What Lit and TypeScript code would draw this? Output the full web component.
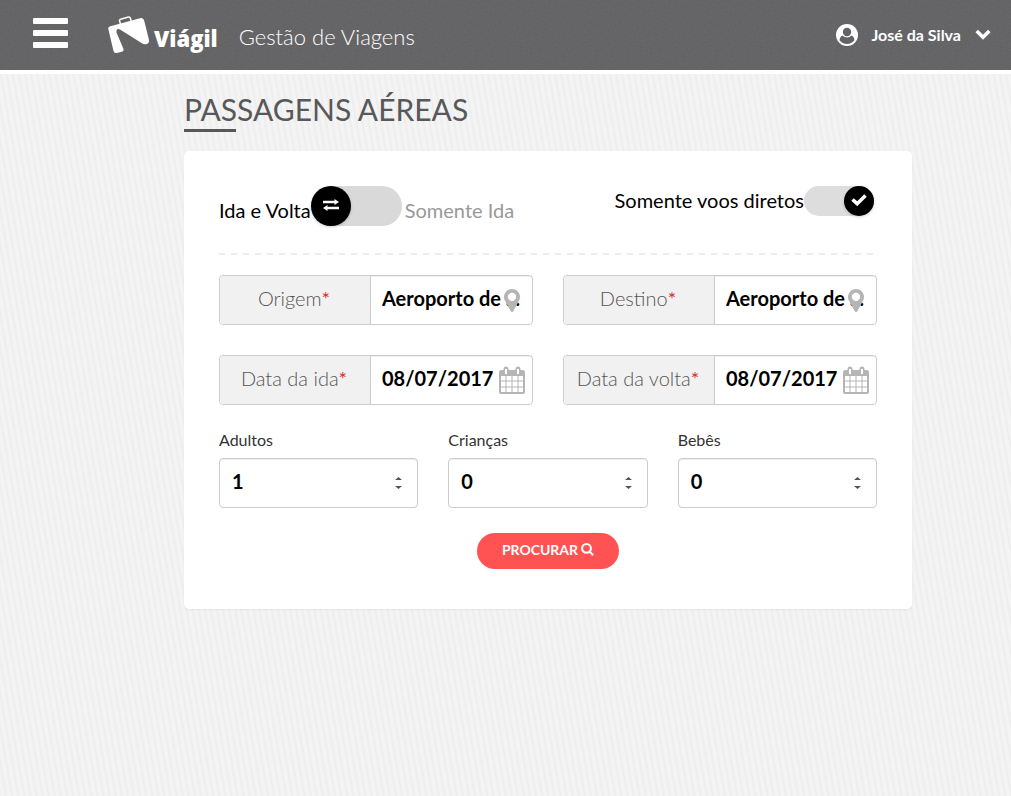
import { LitElement, html, css } from "lit";
import { customElement, property, state } from "lit/decorators.js";

const pinIcon = html`<svg class="pin" viewBox="0 0 16 23" width="16" height="23" aria-hidden="true">
  <path fill="#b5b5b5" fill-rule="evenodd" d="M8 0a8 8 0 0 1 8 8c0 1.300-.3 2.400-.8 3.400L9.300 22.200a1.500 1.500 0 0 1-2.600 0L.8 11.400A7.500 7.500 0 0 1 0 8a8 8 0 0 1 8-8Zm0 3.700a4.200 4.200 0 1 0 0 8.400 4.200 4.200 0 0 0 0-8.400Z"/>
</svg>`;

const calendarIcon = html`<svg class="calendar" viewBox="0 0 26 28" width="26" height="28" aria-hidden="true">
  <path fill="#b5b5b5" fill-rule="evenodd" d="M2 4h2.500V2.800A2.500 2.500 0 0 1 7 .5a2.500 2.500 0 0 1 2.500 2.300V4h7V2.800A2.500 2.500 0 0 1 19 .5a2.500 2.500 0 0 1 2.500 2.300V4H24a2 2 0 0 1 2 2v20a2 2 0 0 1-2 2H2a2 2 0 0 1-2-2V6a2 2 0 0 1 2-2Zm4-1v5h2V3ZM18 3v5h2V3ZM2 10v4.500h4.500V10Zm5.500 0v4.500h5V10Zm6 0v4.500h5V10Zm6 0v4.500H24V10ZM2 15.500v5h4.500v-5Zm5.500 0v5h5v-5Zm6 0v5h5v-5Zm6 0v5H24v-5ZM2 21.500V26h4.500v-4.500Zm5.500 0V26h5v-4.500Zm6 0V26h5v-4.500Zm6 0V26H24v-4.500Z"/>
</svg>`;

const baseText = css`
  * { box-sizing: border-box; }
  input, button { font-family: inherit; margin: 0; }
`;

@customElement("top-bar")
export class TopBar extends LitElement {
  static styles = [baseText, css`
    :host { display: block; }
    .bar {
      display: flex;
      align-items: center;
      height: 74px;
      padding: 0 20px 0 33px;
      border-bottom: 4px solid #fff;
      color: #fff;
      background-color: #5f5f61;
      background-image: url("data:image/svg+xml,%3Csvg xmlns='http://www.w3.org/2000/svg' width='120' height='120'%3E%3Cfilter id='n'%3E%3CfeTurbulence type='fractalNoise' baseFrequency='.7' numOctaves='2' stitchTiles='stitch'/%3E%3CfeColorMatrix type='saturate' values='0'/%3E%3C/filter%3E%3Crect width='120' height='120' filter='url(%23n)' opacity='.12'/%3E%3C/svg%3E");
    }
    button { border: 0; padding: 0; background: none; color: inherit; cursor: pointer; }
    .menu { display: grid; gap: 6px; width: 35px; padding-bottom: 5px; }
    .menu span { height: 6px; border-radius: 1px; background: #fff; }
    .brand {
      display: flex;
      align-items: center;
      margin-left: 40px;
      color: inherit;
      text-decoration: none;
    }
    .name { margin: 5px 0 0 4px; font: 800 22px/30px "Open Sans", "Noto Sans", sans-serif; }
    .tagline { margin: 4px 0 0 21px; font-size: 22px; line-height: 30px; font-weight: 300; }
    .user {
      display: flex;
      align-items: center;
      margin-left: auto;
      padding-bottom: 1px;
      font-size: 16px;
      line-height: 22px;
      font-weight: 700;
    }
    .user span { margin: 0 14px 0 13px; }
  `];

  render() {
    return html`<header class="bar">
      <button class="menu" aria-label="Menu"><span></span><span></span><span></span></button>
      <a class="brand" href="#">
        <svg viewBox="0 0 42 38" width="42" height="38" aria-hidden="true">
          <path fill="#fff" d="M1.500 10.500 32 2.200q3.500-.8 4.200 2.500L41 24q.5 3.500-3 4.200-2.400.3-4.500-1.200L12 13.400q-4-1.800-3.500 3.200L15.500 33q.6 2-1.500 2.700l-5.500 1.200q-2.300.4-3-1.800L.3 13Q0 11 1.500 10.500Z"/>
          <path fill="none" stroke="#fff" stroke-width="1.500" d="m12.500 8-1-3.200q-.2-1.300 1-1.600L20.500 1q1.500-.2 1.800 1l.8 3"/>
        </svg>
        <span class="name">Viágil</span>
      </a>
      <div class="tagline">Gestão de Viagens</div>
      <button class="user">
        <svg viewBox="0 0 22 22" width="22" height="22" aria-hidden="true">
          <circle cx="11" cy="11" r="11" fill="#fff"/>
          <circle cx="11" cy="8" r="4.200" fill="#636365"/>
          <path fill="#636365" d="M6.500 11.500c-1.800.7-2.800 2.500-3 4.800a9.500 9.500 0 0 0 15 0c-.2-2.300-1.200-4.100-3-4.800a6 6 0 0 1-9 0Z"/>
        </svg>
        <span>José da Silva</span>
        <svg viewBox="0 0 16 11" width="16" height="11" aria-hidden="true"><path fill="none" stroke="#fff" stroke-width="3.600" d="m1.700 2 6.300 6.200L14.300 2"/></svg>
      </button>
    </header>`;
  }
}

@customElement("labelled-field")
export class LabelledField extends LitElement {
  @property() label = "";
  @property() value = "";
  @property() icon: "pin" | "calendar" = "pin";

  static styles = [baseText, css`
    :host { display: block; min-width: 0; }
    .group {
      position: relative;
      display: flex;
      height: 50px;
      border: 1px solid #ccc;
      border-radius: 4px;
      overflow: hidden;
      background: #fff;
      box-shadow: inset 0 1px 1px rgba(0, 0, 0, 0.075);
    }
    label {
      flex: 0 0 151px;
      border-right: 1px solid #ccc;
      padding-right: 2px;
      background: #f1f1f1;
      color: #555;
      font-size: 20px;
      line-height: 44px;
      font-weight: 300;
      text-align: center;
    }
    sup { color: #e02b2b; font-size: inherit; font-weight: 400; line-height: 0; vertical-align: baseline; }
    input {
      flex: 1;
      width: 0;
      border: 0;
      padding: 0 11px 5px;
      background: none;
      color: #000;
      font-size: 20px;
      font-weight: 700;
      text-overflow: ellipsis;
    }
    .pin { position: absolute; right: 12px; top: 13px; }
    .calendar { position: absolute; right: 7px; top: 10px; }
  `];

  render() {
    return html`<div class="group">
      <label for="field">${this.label}<sup>*</sup></label>
      <input id="field" type="text" required .value=${this.value} />
      ${this.icon === "pin" ? pinIcon : calendarIcon}
    </div>`;
  }
}

@customElement("count-field")
export class CountField extends LitElement {
  @property() label = "";
  @property() value = "0";

  static styles = [baseText, css`
    :host { display: block; min-width: 0; }
    label { display: block; margin-bottom: 8px; color: #333; font-size: 16px; line-height: 20px; }
    .box { position: relative; }
    input {
      display: block;
      width: 100%;
      height: 50px;
      border: 1px solid #ccc;
      border-radius: 4px;
      padding: 0 12px 5px;
      background: #fff;
      box-shadow: inset 0 1px 1px rgba(0, 0, 0, 0.075);
      color: #000;
      font-size: 20px;
      font-weight: 700;
      appearance: textfield;
    }
    .arrows { position: absolute; right: 16px; top: 19px; pointer-events: none; }
  `];

  render() {
    return html`<label for="count">${this.label}</label>
      <div class="box">
        <input id="count" type="number" min="0" .value=${this.value} />
        <svg class="arrows" viewBox="0 0 7 12" width="7" height="12" aria-hidden="true">
          <path fill="#555" d="M3.500 0 7 3H0ZM0 9h7l-3.500 3Z"/>
        </svg>
      </div>`;
  }
}

@customElement("app-root")
export class AppRoot extends LitElement {
  @state() oneWay = false;
  @state() direct = true;

  static styles = [baseText, css`
    :host {
      display: block;
      min-height: 100vh;
      font-family: Lato, "Open Sans", sans-serif;
      background: #f4f4f4 repeating-linear-gradient(80deg, #ededed 0, #f4f4f4 2px, #f4f4f4 4px, #ededed 6px);
    }
    main { margin: 0 99px 0 184px; padding: 15px 0 40px; }
    h1 { margin: 0; color: #58585a; font-size: 30px; line-height: 40px; font-weight: 400; }
    .rule { width: 52px; height: 3px; background: #58585a; }
    .card {
      margin-top: 19px;
      padding: 35px 35px 40px;
      border-radius: 5px;
      background: #fff;
      box-shadow: 0 1px 2px rgba(0, 0, 0, 0.06);
    }
    .options {
      display: flex;
      justify-content: space-between;
      align-items: flex-start;
      padding-right: 3px;
      font-size: 20px;
      line-height: 28px;
      color: #000;
    }
    .option { display: flex; align-items: flex-end; cursor: pointer; }
    .text { padding-bottom: 2px; }
    .muted { margin-left: 3px; color: #999; }
    .toggle { position: relative; display: block; }
    .toggle input {
      display: block;
      appearance: none;
      width: 70px;
      height: 30px;
      border-radius: 20px;
      background: #ddd;
      cursor: pointer;
    }
    .toggle.large input { width: 91px; height: 40px; background: #d9d9d9; }
    .knob {
      position: absolute;
      top: 0;
      left: 0;
      display: grid;
      place-items: center;
      width: 30px;
      height: 30px;
      padding-bottom: 2px;
      border-radius: 50%;
      background: #000;
      box-shadow: 0 1px 3px rgba(0, 0, 0, 0.2);
      pointer-events: none;
    }
    .large .knob { width: 40px; height: 40px; }
    input:checked + .knob { left: auto; right: 0; }
    .dashes {
      height: 2px;
      margin: 27px 3px 20px 0;
      background: repeating-linear-gradient(90deg, #ececec 0 6px, transparent 6px 12px);
    }
    .pairs { display: grid; grid-template-columns: 1fr 1fr; gap: 30px; }
    .counts { display: grid; grid-template-columns: repeat(3, 1fr); gap: 30px; margin-top: 25px; }
    .actions { display: flex; justify-content: center; margin-top: 25px; }
    .search {
      display: flex;
      align-items: center;
      gap: 3px;
      height: 36px;
      border: 0;
      border-radius: 18px;
      padding: 0 25px 3px;
      background: #ff5252;
      color: #fff;
      font-size: 14px;
      font-weight: 700;
      cursor: pointer;
    }
  `];

  render() {
    return html`
      <top-bar></top-bar>
      <main>
        <h1>PASSAGENS AÉREAS</h1>
        <div class="rule"></div>
        <form class="card" @submit=${(e: Event) => e.preventDefault()}>
          <div class="options">
            <label class="option">
              <span class="text">Ida e Volta</span>
              <span class="toggle large">
                <input type="checkbox" .checked=${this.oneWay} @change=${(e: Event) => (this.oneWay = (e.target as HTMLInputElement).checked)} />
                <span class="knob">
                  <svg viewBox="0 0 16 12" width="16" height="12" aria-hidden="true"><path fill="#fff" d="M0 1.800h11.500V0L16 3l-4.500 3V4.200H0ZM16 7.800v2.400H4.500V12L0 9l4.500-3v1.800Z"/></svg>
                </span>
              </span>
              <span class="text muted">Somente Ida</span>
            </label>
            <label class="option">
              <span class="text">Somente voos diretos</span>
              <span class="toggle">
                <input type="checkbox" .checked=${this.direct} @change=${(e: Event) => (this.direct = (e.target as HTMLInputElement).checked)} />
                <span class="knob">
                  <svg viewBox="0 0 16 12" width="16" height="12" aria-hidden="true"><path fill="none" stroke="#fff" stroke-width="3.600" d="m1.500 5.500 4.700 4.200L14.500 1.500"/></svg>
                </span>
              </span>
            </label>
          </div>
          <div class="dashes"></div>
          <div class="pairs">
            <labelled-field label="Origem" value="Aeroporto de ..." icon="pin"></labelled-field>
            <labelled-field label="Destino" value="Aeroporto de ..." icon="pin"></labelled-field>
            <labelled-field label="Data da ida" value="08/07/2017" icon="calendar"></labelled-field>
            <labelled-field label="Data da volta" value="08/07/2017" icon="calendar"></labelled-field>
          </div>
          <div class="counts">
            <count-field label="Adultos" value="1"></count-field>
            <count-field label="Crianças" value="0"></count-field>
            <count-field label="Bebês" value="0"></count-field>
          </div>
          <div class="actions">
            <button class="search" type="submit">PROCURAR<svg viewBox="0 0 13 13" width="13" height="13" aria-hidden="true"><path fill="none" stroke="#fff" stroke-width="2" d="M9.900 5.400a4.400 4.400 0 1 1-8.800 0 4.400 4.400 0 0 1 8.800 0ZM8.700 8.700l3.500 3.500"/></svg></button>
          </div>
        </form>
      </main>`;
  }
}
